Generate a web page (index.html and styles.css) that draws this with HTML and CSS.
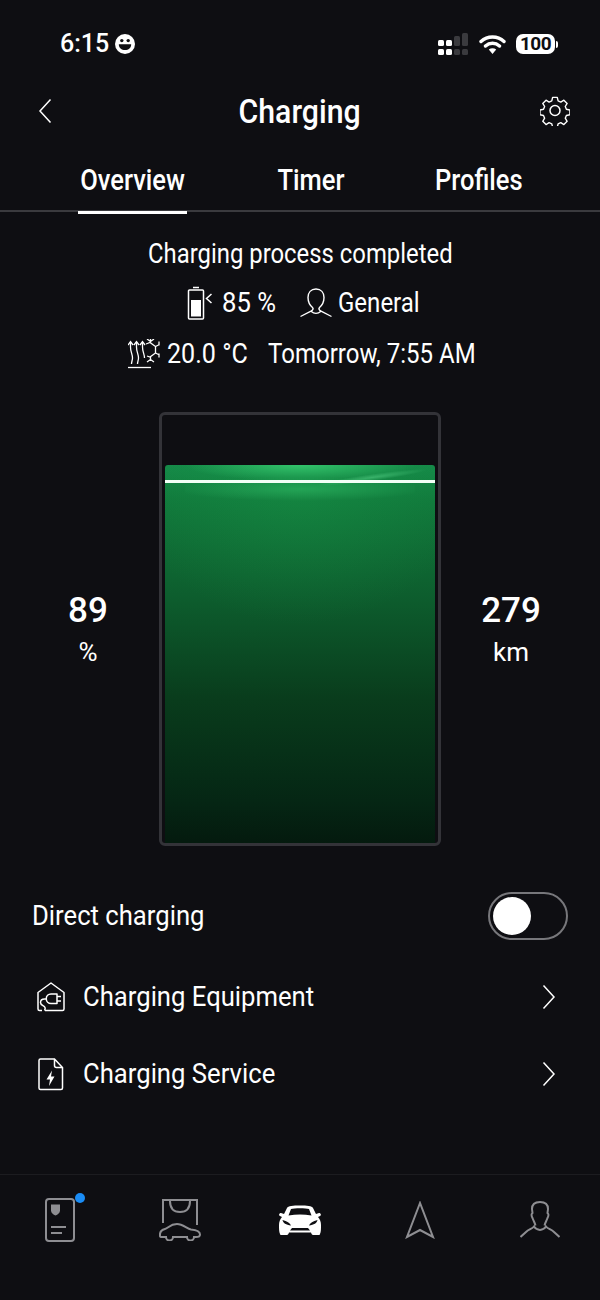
FILE: index.html
```html
<!DOCTYPE html>
<html lang="en">
<head>
  <title>Charging</title>
  <meta charset="utf-8">
  <meta name="viewport" content="width=device-width, initial-scale=1">
  <link rel="stylesheet" href="styles.css">
</head>
<body>
  <!-- Status bar -->
  <div class="status-bar">
    <div class="status-left">
      <span class="clock">6:15</span>
      <svg class="emoji" width="20" height="20" viewBox="0 0 20 20">
        <circle cx="10" cy="10" r="10" fill="#fff"/>
        <circle cx="6.800" cy="6.600" r="1.700" fill="#0e0e12"/>
        <circle cx="13.200" cy="6.600" r="1.700" fill="#0e0e12"/>
        <path d="M3.800 10.200h12.400c0 3.600-2.700 5.800-6.200 5.800s-6.200-2.200-6.200-5.800z" fill="#0e0e12"/>
      </svg>
    </div>
    <div class="status-right">
      <svg width="30" height="22" viewBox="0 0 30 22">
        <g fill="#fff">
          <rect x="0" y="7" width="6" height="6" rx="1.500"/>
          <rect x="8" y="7" width="6" height="6" rx="1.500"/>
          <rect x="0" y="16" width="6" height="6" rx="1.500"/>
          <rect x="8" y="16" width="6" height="6" rx="1.500"/>
        </g>
        <g fill="#3a3a3e">
          <rect x="16" y="3" width="6" height="10" rx="1.500"/>
          <rect x="24" y="0" width="6" height="13" rx="1.500"/>
          <rect x="16" y="16" width="6" height="6" rx="1.500"/>
          <rect x="24" y="16" width="6" height="6" rx="1.500"/>
        </g>
      </svg>
      <svg class="wifi" width="27" height="21" viewBox="0 0 27 21">
        <path d="M2 7.500c6.500-6 16.500-6 23 0M6.500 12c4-3.600 10-3.600 14 0" fill="none" stroke="#fff" stroke-width="3.400" stroke-linecap="round"/>
        <path d="M9.800 15.500c2.200-1.800 5.200-1.800 7.400 0l-3.700 4.500z" fill="#fff"/>
      </svg>
      <div class="battery-pill">100</div>
      <div class="battery-cap"></div>
    </div>
  </div>

  <!-- Header -->
  <header class="app-header">
    <svg width="14" height="26" viewBox="0 0 14 26">
      <path d="M12.500 1.500L2 13l10.500 11.500" fill="none" stroke="#fff" stroke-width="1.500"/>
    </svg>
    <h1><span>Charging</span></h1>
    <svg width="30" height="30" viewBox="0 0 30 30">
      <path d="M12.500 1.500h5l.9 3.800 2.900 1.200 3.300-2 3.500 3.500-2 3.300 1.200 2.900 3.800.9v5l-3.800.9-1.200 2.900 2 3.300-3.500 3.500-3.300-2-2.900 1.200-.9 3.800h-5l-.9-3.800-2.900-1.200-3.300 2-3.500-3.500 2-3.300-1.200-2.900-3.800-.9v-5l3.800-.9 1.200-2.900-2-3.300 3.500-3.500 3.300 2 2.900-1.200z" fill="none" stroke="#fff" stroke-width="1.500" stroke-linejoin="round" transform="translate(1 0) scale(.93)"/>
      <circle cx="15" cy="14.500" r="5" fill="none" stroke="#fff" stroke-width="1.500"/>
    </svg>
  </header>

  <!-- Tabs -->
  <nav class="tabs">
    <a class="tab tab-overview tab-active"><span>Overview</span></a>
    <a class="tab tab-timer"><span>Timer</span></a>
    <a class="tab tab-profiles"><span>Profiles</span></a>
  </nav>

  <!-- Summary -->
  <section class="summary">
    <p class="summary-title">Charging process completed</p>
    <p class="summary-row summary-charge">
      <svg width="26" height="34" viewBox="0 0 26 34">
        <path d="M6 1.500h6M2.500 4h13a1 1 0 0 1 1 1v27a1 1 0 0 1-1 1h-13a1 1 0 0 1-1-1V5a1 1 0 0 1 1-1z" fill="none" stroke="#fff" stroke-width="1.500"/>
        <rect x="4" y="14" width="10" height="16.500" fill="#fff"/>
        <path d="M24.500 8l-5 4.500 5 4.500" fill="none" stroke="#fff" stroke-width="1.500"/>
      </svg>
      <span class="item-percent narrow-num">85 %</span>
      <svg width="32" height="30" viewBox="0 0 32 30">
        <path d="M16 1c-5 0-8 3.500-8 8.500 0 4 1.800 8 5 10.500M16 1c5 0 8 3.500 8 8.500 0 4-1.800 8-5 10.500M13 20c.3 1.500-.5 2.500-2 3.200L.5 28.500M19 20c-.3 1.500.5 2.500 2 3.200l10.500 5.300M11 23.200c3 2.600 7 2.600 10 0" fill="none" stroke="#fff" stroke-width="1.400"/>
      </svg>
      <span class="item-profile narrow">General</span>
    </p>
    <p class="summary-row summary-climate">
      <svg width="32" height="30" viewBox="0 0 32 30">
        <g fill="none" stroke="#fff" stroke-width="1.300">
          <path d="M0 28.500h23"/>
          <path d="M2.500 3v5c0 5 2 7 2 11 0 2-1 4-1 6M8.500 3v5c0 5 2 7 2 11 0 2-1 4-1 6M14.500 3v5c0 5 2 7 2 11"/>
          <path d="M0 6l2.500-3.500L5 6M6 6l2.500-3.500L11 6M12 6l2.500-3.500L17 6"/>
          <path d="M18 5l4-1.500 5.500 4v6.500l-5.500 4-3-1"/>
          <path d="M22.500 3.500V0M27.500 7.500l4-2M27.500 14l4 2M22.500 18v4M19 0l3.500 2.500L26 0M31 2.500v4M31 14.500v4M19 23l3.500-2.500L26 23"/>
        </g>
      </svg>
      <span class="item-temp narrow-temp">20.0 °C</span>
      <span class="item-time narrow">Tomorrow, 7:55 AM</span>
    </p>
  </section>

  <!-- Charge gauge -->
  <section class="gauge-row">
    <div class="stat stat-left">
      <strong>89</strong>
      <span>%</span>
    </div>
    <div class="gauge">
      <div class="gauge-fill">
        <div class="gauge-glow"></div>
        <div class="gauge-streak"></div>
        <div class="gauge-limit"></div>
      </div>
    </div>
    <div class="stat stat-right">
      <strong>279</strong>
      <span>km</span>
    </div>
  </section>

  <!-- Options -->
  <section class="options">
    <div class="option option-toggle">
      <span class="option-label">Direct charging</span>
      <div class="toggle"><div class="toggle-knob"></div></div>
    </div>
    <div class="option option-link">
      <svg class="option-icon" width="28" height="30" viewBox="0 0 28 30">
        <g fill="none" stroke="#fff" stroke-width="1.500" stroke-linejoin="round">
          <path d="M5 28.500H2.500A1.500 1.500 0 0 1 1 27V10.500L14 1l13 9.500V27a1.500 1.500 0 0 1-1.500 1.500H8"/>
          <path d="M20 12h-6a4.500 4.500 0 0 0 0 9.500h6zM20 14.500h4M20 19h4M9.500 17H7.500c-2.500 0-4 1.500-4 3.500 0 3 3.500 3 4.500 5 .4 1 .2 2-.5 3"/>
        </g>
      </svg>
      <span class="option-label">Charging Equipment</span>
      <svg class="chevron" width="14" height="26" viewBox="0 0 14 26">
        <path d="M1.500 1.500L12 13 1.500 24.500" fill="none" stroke="#fff" stroke-width="1.500"/>
      </svg>
    </div>
    <div class="option option-link">
      <svg class="option-icon" width="28" height="33" viewBox="0 0 28 33">
        <path d="M3.500 1h14l8 8.500V30a1.500 1.500 0 0 1-1.500 1.500H3.500A1.500 1.500 0 0 1 2 30V2.500A1.500 1.500 0 0 1 3.500 1zM17.500 1v6.500a2 2 0 0 0 2 2h6" fill="none" stroke="#fff" stroke-width="1.500"/>
        <path d="M15 12.500l-5.500 9h3.500l-1 6.500 5.500-9.500h-3.500z" fill="#fff"/>
      </svg>
      <span class="option-label">Charging Service</span>
      <svg class="chevron" width="14" height="26" viewBox="0 0 14 26">
        <path d="M1.500 1.500L12 13 1.500 24.500" fill="none" stroke="#fff" stroke-width="1.500"/>
      </svg>
    </div>
  </section>

  <!-- Bottom navigation -->
  <nav class="bottom-nav">
    <div class="nav-item">
      <svg width="30" height="44" viewBox="0 0 30 44">
        <g fill="none" stroke="#8e8e92" stroke-width="2">
          <rect x="1" y="1" width="28" height="42" rx="3"/>
          <path d="M6 29h15M6 35h11"/>
        </g>
        <path d="M6 6.500h9v6c0 2.500-2.200 4-4.500 5-2.300-1-4.500-2.500-4.500-5z" fill="#8e8e92"/>
      </svg>
      <span class="nav-dot"></span>
    </div>
    <div class="nav-item">
      <svg width="42" height="42" viewBox="0 0 42 42">
        <g fill="none" stroke="#8e8e92" stroke-width="2">
          <path d="M4 24V1h34v25"/>
          <path d="M11 2c0 8 4 11 10 11s10-3 10-11"/>
          <path d="M1 37c-.500-4 1-6 5-7 3-.500 5-5 12-5 6 0 10 5 14 5.500 6 .5 9 2 9 5 0 2-1 2.500-4 2.500h-2a3.500 3.500 0 0 1-7 0H14a3.500 3.500 0 0 1-7 0H3c-1 0-2 0-2-1z"/>
        </g>
      </svg>
    </div>
    <div class="nav-item">
      <svg width="44" height="30" viewBox="0 0 44 30">
        <path fill="#fff" fill-rule="evenodd" d="M6 9L9 3C10 1 15 .5 22 .5S34 1 35 3L38 9 41 8C43 8 43.500 10.500 42 11L40 12C42 14 43 17 43 20 43 24 43 27 42 29 42 30 41 30 40 30H35C34 30 33.500 29 33 27.500H11C10.500 29 10 30 9 30H4C3 30 2 30 2 29 1 27 1 24 1 20 1 17 2 14 4 12L2 11C.5 10.500 1 8 3 8zM10.500 10.500C18 9.200 26 9.200 33.500 10.500L31 4C28 3 16 3 13 4zM4.500 15C5 18 8 20 13 20.500 12 18 9 16 4.500 15zM39.500 15C35 16 32 18 31 20.500 36 20 39 18 39.500 15zM12 25.500H32L30 23H14z"/>
      </svg>
    </div>
    <div class="nav-item">
      <svg width="30" height="38" viewBox="0 0 30 38">
        <path d="M15 2L2 36l13-7 13 7z" fill="none" stroke="#8e8e92" stroke-width="2" stroke-linejoin="miter"/>
      </svg>
    </div>
    <div class="nav-item">
      <svg width="40" height="37" viewBox="0 0 40 37">
        <path d="M20 1c-5.500 0-8 3-8 7l.5 4c-1.500 1-1 3 0 5 1 3 2.500 5 3 7.500M20 1c5.500 0 8 3 8 7l-.5 4c1.500 1 1 3 0 5-1 3-2.500 5-3 7.500M.5 36L6 31c3-2.800 6-3 8-5.500 3 4.500 9 4.500 12 0 2 2.500 5 2.700 8 5.500l5.500 5" fill="none" stroke="#8e8e92" stroke-width="2"/>
      </svg>
    </div>
  </nav>
</body>
</html>
```

FILE: styles.css
```css
html {
  height: 100%;
}

body {
  margin: 0;
  width: 600px;
  height: 1300px;
  overflow: hidden;
  background-color: #0e0e12;
  color: #fff;
  font-family: 'Roboto', sans-serif;
  font-size: 27px;
  font-weight: 400;
  line-height: 32px;
}

p {
  margin: 0;
}

svg {
  display: block;
  flex: none;
}

/* Status bar */
.status-bar {
  display: flex;
  justify-content: space-between;
  align-items: center;
  height: 88px;
  padding: 0 42px 0 60px;
}

.status-left,
.status-right {
  display: flex;
  align-items: center;
}

.clock {
  font-size: 25px;
  font-weight: 500;
}

.emoji {
  margin-left: 6px;
}

.wifi {
  margin-left: 11px;
}

.battery-pill {
  margin-left: 10px;
  width: 39px;
  height: 20px;
  border-radius: 7px;
  background-color: #fff;
  color: #0e0e12;
  font-size: 19px;
  font-weight: 700;
  letter-spacing: -.5px;
  line-height: 20px;
  text-align: center;
}

.battery-cap {
  margin-left: 1px;
  width: 2px;
  height: 7px;
  border-radius: 0 2px 2px 0;
  background-color: #fff;
}

/* Header */
.app-header {
  display: flex;
  justify-content: space-between;
  align-items: center;
  height: 46px;
  padding: 0 30px 0 38px;
}

.app-header h1 {
  display: flex;
  justify-content: center;
  width: 121px;
  margin: 0 0 0 7px;
  font-size: 34px;
  font-weight: 500;
  line-height: 46px;
}

/* no condensed face is installed, so the text is narrowed by hand */
.app-header h1 span {
  flex: none;
  transform: scaleX(.89);
}

/* Tabs */
.tabs {
  display: flex;
  gap: 89px;
  height: 54px;
  margin-top: 22px;
  padding-left: 78px;
  border-bottom: 2px solid #3a3a3e;
  font-size: 29px;
  font-weight: 500;
  line-height: 48px;
}

.tab {
  display: flex;
  justify-content: center;
  height: 54px;
}

.tab span {
  flex: none;
  transform: scaleX(.88);
}

.tab-overview {
  width: 109px;
}

.tab-timer {
  width: 70px;
}

.tab-profiles {
  width: 88px;
}

.tab-active {
  height: 55px;
  border-bottom: 3px solid #fff;
}

/* Summary */
.summary {
  display: flex;
  flex-direction: column;
  align-items: center;
  gap: 16px;
  padding-top: 26px;
}

.summary-title {
  transform: scaleX(.884);
}

.summary-row {
  display: flex;
  align-items: center;
  justify-content: center;
  white-space: nowrap;
}

.narrow,
.narrow-num,
.narrow-temp {
  transform-origin: left center;
}

.narrow {
  transform: scaleX(.89);
}

.narrow-num {
  transform: scaleX(.95);
}

.narrow-temp {
  transform: scaleX(.93);
}

.summary-charge {
  padding-left: 6px;
}

.summary-climate {
  margin-top: 2px;
  padding-left: 2px;
}

.item-percent {
  width: 55px;
  margin: 0 23px 0 9px;
}

.item-profile {
  width: 81px;
  margin-left: 6px;
}

.item-temp {
  width: 81px;
  margin: 0 20px 0 7px;
}

.item-time {
  width: 207px;
}

/* Gauge */
.gauge-row {
  display: flex;
  justify-content: center;
  align-items: center;
  margin-top: 42px;
}

.stat {
  display: flex;
  flex-direction: column;
  align-items: center;
  box-sizing: border-box;
  width: 159px;
  padding-top: 2px;
  gap: 6px;
}

.stat-left {
  padding-left: 17px;
}

.stat-right {
  padding-right: 19px;
}

.stat strong {
  font-size: 35px;
  font-weight: 500;
  line-height: 38px;
}

.stat span {
  font-size: 26px;
  font-weight: 400;
  line-height: 32px;
}

.gauge {
  display: flex;
  flex-direction: column;
  justify-content: flex-end;
  box-sizing: border-box;
  width: 282px;
  height: 434px;
  padding: 0 3px;
  border: 3px solid #333338;
  border-radius: 6px;
}

.gauge-fill {
  position: relative;
  overflow: hidden;
  height: 378px;
  border-radius: 3px 3px 0 0;
  background: radial-gradient(ellipse 60% 130px at 50% 30px, rgba(30, 170, 80, .22), rgba(30, 170, 80, 0)),
    linear-gradient(180deg, #158a48 0%, #117a3c 9%, #0d5c2d 36%, #093c1c 62%, #052614 89%, #041a0e 100%);
}

.gauge-glow {
  position: absolute;
  top: 0;
  left: 20px;
  right: 20px;
  height: 40px;
  background: radial-gradient(ellipse 50% 16px at 50% 0%, rgba(70, 230, 130, .6), rgba(70, 230, 130, 0)),
    radial-gradient(ellipse 55% 12px at 50% 60%, rgba(70, 230, 130, .3), rgba(70, 230, 130, 0));
}

.gauge-streak {
  position: absolute;
  top: 9px;
  right: 8px;
  width: 110px;
  height: 7px;
  transform: rotate(-8deg);
  background: radial-gradient(ellipse 50% 50% at 50% 50%, rgba(110, 240, 160, .4), rgba(110, 240, 160, 0));
}

.gauge-limit {
  position: absolute;
  top: 15px;
  left: 0;
  right: 0;
  height: 3px;
  background-color: #f2fff6;
}

/* Options */
.options {
  display: flex;
  flex-direction: column;
  margin-top: 46px;
  padding: 0 32px;
}

.option {
  display: flex;
  align-items: center;
}

.option-toggle {
  height: 48px;
}

.option-link {
  height: 76px;
}

.option-toggle + .option-link {
  margin-top: 19px;
}

.option-link + .option-link {
  margin-top: 1px;
}

.option-icon {
  margin: 0 18px 0 5px;
}

.option-label {
  flex: 1;
  transform: scaleX(.95);
  transform-origin: left center;
}

.chevron {
  margin-right: 12px;
}

.toggle {
  display: flex;
  align-items: center;
  box-sizing: border-box;
  width: 80px;
  height: 48px;
  padding-left: 3px;
  border: 2px solid #77777b;
  border-radius: 24px;
}

.toggle-knob {
  width: 38px;
  height: 38px;
  border-radius: 50%;
  background-color: #fff;
}

/* Bottom nav */
.bottom-nav {
  position: absolute;
  top: 1174px;
  left: 0;
  right: 0;
  display: flex;
  height: 125px;
  border-top: 1px solid #1c1c20;
}

.nav-item {
  position: relative;
  display: flex;
  flex: 1;
  justify-content: center;
  align-items: center;
  height: 89px;
}

.nav-dot {
  position: absolute;
  top: 18px;
  left: 75px;
  width: 10px;
  height: 10px;
  border-radius: 50%;
  background-color: #1a8cf5;
}
```
